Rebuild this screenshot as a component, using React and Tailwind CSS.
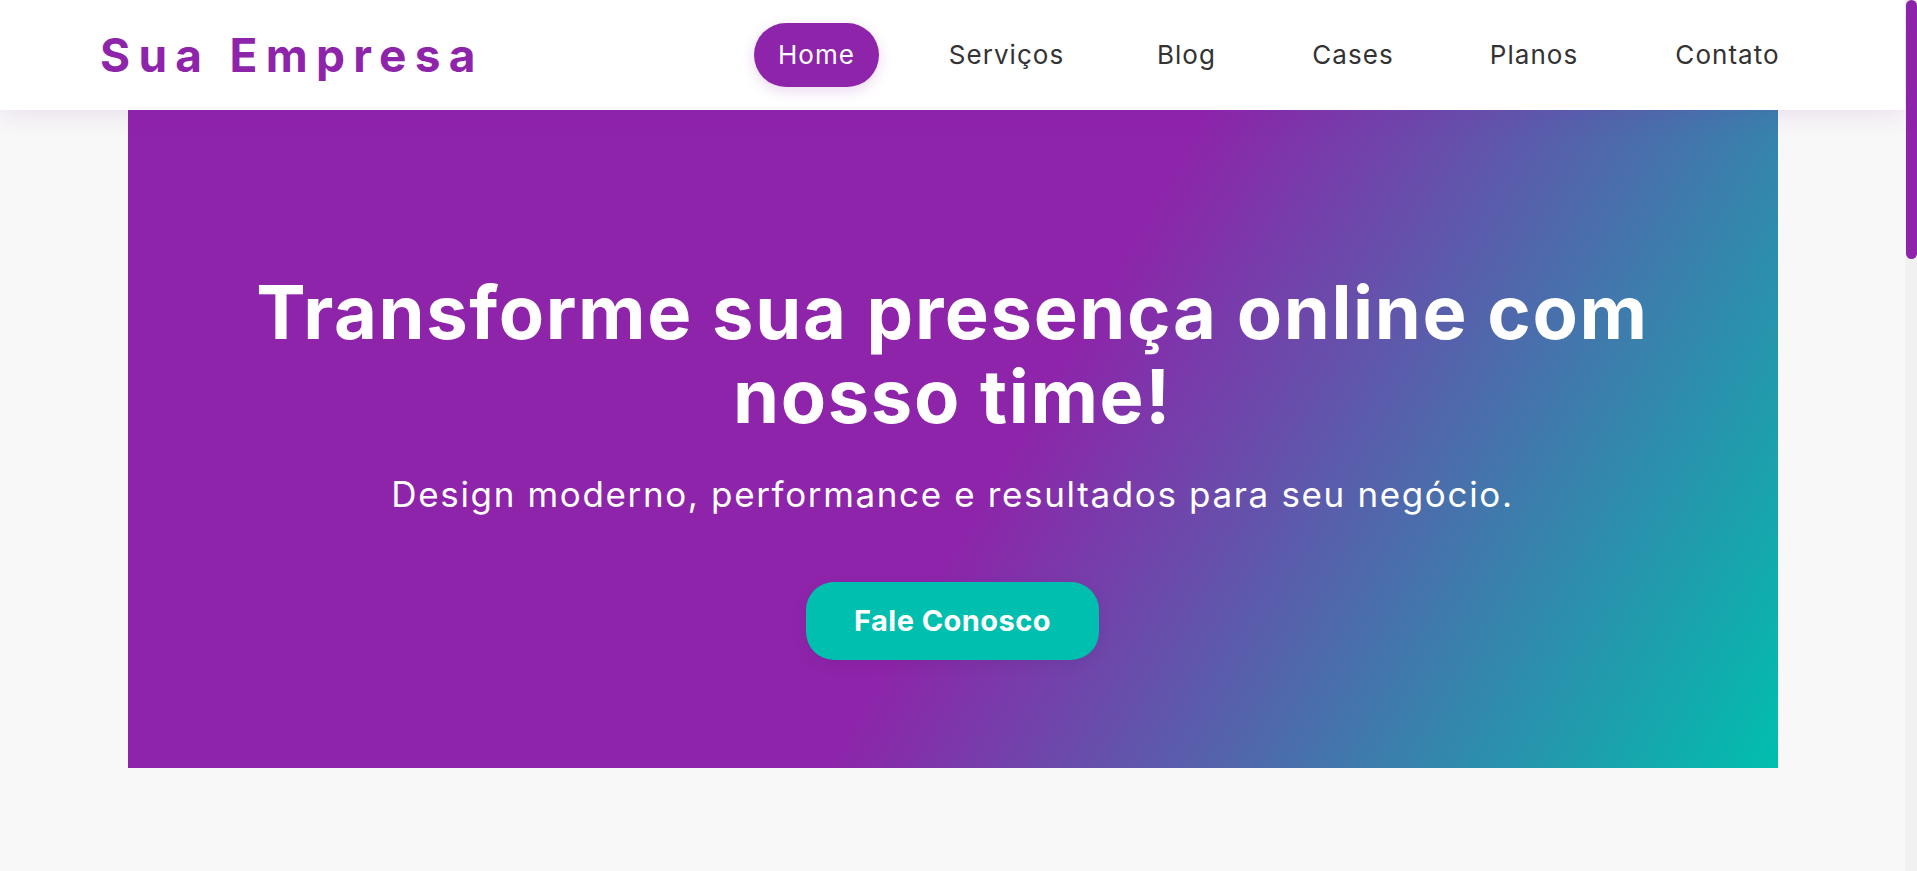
import { useState } from "react";

const navItems = [
  { label: "Home", width: "w-[125px]" },
  { label: "Serviços", width: "w-[157px]" },
  { label: "Blog", width: "w-[105px]" },
  { label: "Cases", width: "w-[130px]" },
  { label: "Planos", width: "w-[134px]" },
  { label: "Contato", width: "w-[155px]" },
];

export default function App() {
  const [active, setActive] = useState("Home");

  return (
    <div className="flex h-[871px] w-full overflow-hidden bg-[#f8f8f8]">
      <div className="flex min-w-0 flex-1 flex-col">
        {/* Header */}
        <header className="relative z-10 flex h-[110px] shrink-0 items-center justify-between bg-white px-[100px] shadow-[0_4px_24px_rgba(142,36,170,0.12)]">
          <h1 className="font-['Inter','Liberation_Sans',sans-serif] text-[46px] font-bold tracking-[0.18em] text-[#8e24aa]">
            Sua Empresa
          </h1>
          <nav className="flex items-center gap-[49px]">
            {navItems.map((item) => (
              <button
                key={item.label}
                onClick={() => setActive(item.label)}
                className={`${item.width} rounded-full py-[13px] text-center font-['Inter','Open_Sans',sans-serif] text-[26px] leading-[38px] tracking-[0.04em] ${
                  active === item.label
                    ? "bg-[#8e24aa] text-white shadow-[0_4px_14px_rgba(142,36,170,0.18)]"
                    : "text-[#333333]"
                }`}
              >
                {item.label}
              </button>
            ))}
          </nav>
        </header>

        {/* Hero */}
        <section className="mx-auto flex h-[658px] w-[1650px] shrink-0 flex-col items-center bg-[linear-gradient(120deg,#8e24aa_53%,#00bfae_100%)] pt-[160px] text-center text-white">
          <h2 className="font-['Inter','Liberation_Sans',sans-serif] text-[74px] font-bold leading-[84px] tracking-[0.022em]">
            Transforme sua presença online com
            <br />
            nosso time!
          </h2>
          <p className="mt-[31px] font-['Inter','Open_Sans',sans-serif] text-[35px] leading-[51px] tracking-[0.047em]">
            Design moderno, performance e resultados para seu negócio.
          </p>
          <button className="mt-[62px] h-[78px] w-[293px] rounded-[28px] bg-[#00bfae] font-['Inter','Liberation_Sans',sans-serif] text-[29px] font-bold tracking-[0.015em] shadow-[0_4px_16px_rgba(0,0,0,0.07)]">
            Fale Conosco
          </button>
        </section>
      </div>

      {/* Scrollbar */}
      <div className="w-[12px] shrink-0 bg-[#f1f1f1]">
        <div className="ml-px h-[259px] w-[11px] rounded-full bg-[#8e24aa]" />
      </div>
    </div>
  );
}
